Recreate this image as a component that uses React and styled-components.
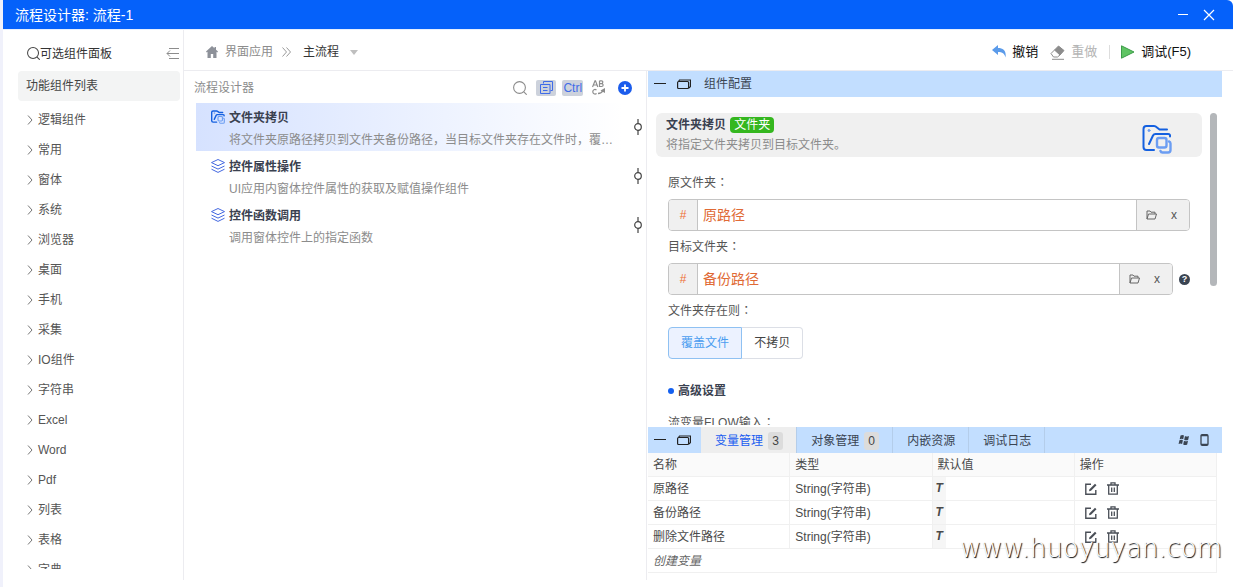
import React, { useState } from 'react';
import styled, { createGlobalStyle } from 'styled-components';

const groups = [
  '逻辑组件', '常用', '窗体', '系统', '浏览器', '桌面', '手机', '采集',
  'IO组件', '字符串', 'Excel', 'Word', 'Pdf', '列表', '表格', '字典',
];

const steps = [
  {
    id: 1,
    icon: 'folder',
    title: '文件夹拷贝',
    desc: '将文件夹原路径拷贝到文件夹备份路径，当目标文件夹存在文件时，覆盖文件',
  },
  { id: 2, icon: 'layers', title: '控件属性操作', desc: 'UI应用内窗体控件属性的获取及赋值操作组件' },
  { id: 3, icon: 'layers', title: '控件函数调用', desc: '调用窗体控件上的指定函数' },
];

const tabs = [
  { label: '变量管理', count: 3 },
  { label: '对象管理', count: 0 },
  { label: '内嵌资源' },
  { label: '调试日志' },
];

const variables = ['原路径', '备份路径', '删除文件路径'];

const App = () => {
  const [activeStep, setActiveStep] = useState(1);
  const [activeTab, setActiveTab] = useState('变量管理');
  const [mode, setMode] = useState('覆盖文件');

  return (
    <>
      <GlobalStyle />
      <Window>
        <TitleBar>
          <WindowTitle>流程设计器: 流程-1</WindowTitle>
          <TitleButton aria-label="最小化">
            <svg width="12" height="12" viewBox="0 0 12 12" stroke="#fff" fill="none">
              <path d="M1 5.500h10" />
            </svg>
          </TitleButton>
          <TitleButton aria-label="关闭">
            <svg width="12" height="12" viewBox="0 0 12 12" stroke="#fff" strokeWidth="1.2" fill="none">
              <path d="M1 1l10 10M11 1L1 11" />
            </svg>
          </TitleButton>
        </TitleBar>

        <Body>
          {/* Component list */}
          <Sidebar>
            <SidebarHead>
              <SearchIcon size={13} color="#444" />
              <SidebarTitle>可选组件面板</SidebarTitle>
              <IconButton aria-label="收起">
                <svg width="14" height="14" viewBox="0 0 14 14" stroke="#8c8c8c" fill="none">
                  <path d="M3 1.5h10M6 6.500h7M3 11.500h10M4 3.500L1 6.500l3 3M1 6.500h5" />
                </svg>
              </IconButton>
            </SidebarHead>
            <ListHeading>功能组件列表</ListHeading>
            <GroupList>
              {groups.map((name) => (
                <li key={name}>
                  <GroupButton>
                    <svg width="6" height="10" viewBox="0 0 6 10" stroke="#777" fill="none">
                      <path d="M1 .5L5 5 1 9.5" />
                    </svg>
                    {name}
                  </GroupButton>
                </li>
              ))}
            </GroupList>
          </Sidebar>

          <Main>
            <TopBar>
              <svg width="12" height="12" viewBox="0 0 12 12" fill="#8d9199">
                <path d="M6 0L0 5.6l.7.8.8-.7V12h3.300V8h2.400v4h3.300V5.700l.8.7.7-.8L10 3.700V1H8.500v1.300z" />
              </svg>
              <Crumb href="#app">界面应用</Crumb>
              <svg width="9" height="10" viewBox="0 0 9 10" stroke="#999" fill="none">
                <path d="M.5.500L4.500 5l-4 4.500M4.500.5l4 4.500-4 4.500" />
              </svg>
              <FlowButton>
                主流程
                <svg width="8" height="5" viewBox="0 0 8 5" fill="#bfbfbf">
                  <path d="M0 0h8L4 5z" />
                </svg>
              </FlowButton>
              <Actions>
                <ActionButton>
                  <svg width="14" height="14" viewBox="0 0 14 14" fill="#5b9bea">
                    <path d="M0 5L6 0v3c5.500 0 8.500 3.200 7.500 9.500C12.500 8.500 10.500 7 6 7v3z" />
                  </svg>
                  撤销
                </ActionButton>
                <ActionButton disabled>
                  <svg width="15" height="15" viewBox="0 0 15 15" fill="none" stroke="#8c8c8c">
                    <path d="M8.500 1l5.500 4.500-4 4.500-5.500-5z" fill="#8c8c8c" />
                    <path d="M4.500 5L1 8.500 3.500 12h4L10 10M2 14.300h12" />
                  </svg>
                  重做
                </ActionButton>
                <Separator />
                <ActionButton>
                  <svg width="14" height="14" viewBox="0 0 14 14" fill="#5fc463" stroke="#3d9b4a">
                    <path d="M.5.800L13 7 .5 13.200z" />
                  </svg>
                  调试(F5)
                </ActionButton>
              </Actions>
            </TopBar>

            <Workspace>
              {/* Flow steps */}
              <Designer>
                <DesignerHead>
                  <DesignerTitle>流程设计器</DesignerTitle>
                  <ToolButton aria-label="搜索"><SearchIcon size={14} color="#8c8c8c" /></ToolButton>
                  <ToolButton $on aria-label="复制">
                    <svg width="13" height="13" viewBox="0 0 13 13" stroke="#3f6be8" fill="none">
                      <path d="M3.500 2.500V.5h9v9h-2M.5 3.500h9.500v9H.5zM3 6.500h4.500M3 9.500h4.500" />
                    </svg>
                  </ToolButton>
                  <ToolButton $on>Ctrl</ToolButton>
                  <ToolButton aria-label="重命名">
                    <svg width="14" height="15" viewBox="0 0 14 15" stroke="#8c8c8c" strokeWidth="1.200" fill="none">
                      <path d="M.5 7L3 .8h.5L5.800 7M1.400 5h3.600M7.500.8v5.700h2c2.200 0 2.200-2.900 0-2.900h-2M9.500 3.600c1.700 0 1.700-2.800 0-2.800h-2M4.500 10C2.800 8.800.8 9.800.8 11.700s2 3 3.800 1.800" />
                      <path d="M6 13.500c3 0 4-1 5-3" strokeWidth="1.300" />
                      <path d="M8.500 10.500l4.500-2.500v5z" fill="#8c8c8c" stroke="none" />
                    </svg>
                  </ToolButton>
                  <ToolButton aria-label="添加">
                    <svg width="14" height="14" viewBox="0 0 14 14">
                      <circle cx="7" cy="7" r="7" fill="#1b5cec" />
                      <path d="M7 3.500v7M3.500 7h7" stroke="#fff" strokeWidth="1.800" />
                    </svg>
                  </ToolButton>
                </DesignerHead>
                <StepList>
                  {steps.map((step) => (
                    <StepRow key={step.id}>
                      <Step $active={step.id === activeStep} onClick={() => setActiveStep(step.id)}>
                        {step.icon === 'folder' ? <FolderCopyIcon size={14} stroke={3} /> : <LayersIcon />}
                        <StepText>
                          <StepTitle>{step.title}</StepTitle>
                          <StepDesc>{step.desc}</StepDesc>
                        </StepText>
                      </Step>
                      <svg width="8" height="16" viewBox="0 0 8 16" stroke="#444" strokeWidth="1.200" fill="none">
                        <circle cx="4" cy="8" r="3.300" />
                        <path d="M4 0v4.700M4 11.300V16" />
                      </svg>
                    </StepRow>
                  ))}
                </StepList>
              </Designer>

              {/* Config + variables */}
              <Inspector>
                <PanelBar>
                  <PanelControls />
                  <PanelTitle>组件配置</PanelTitle>
                </PanelBar>
                <ConfigArea>
                  <ConfigBody>
                    <InfoCard>
                      <div>
                        <CardTitle>文件夹拷贝 <Tag>文件夹</Tag></CardTitle>
                        <CardText>将指定文件夹拷贝到目标文件夹。</CardText>
                      </div>
                      <FolderCopyIcon size={30} stroke={2} />
                    </InfoCard>
                    <Form>
                      <PathField id="source" label="原文件夹" value="原路径" />
                      <PathField id="target" label="目标文件夹" value="备份路径" help />
                      <FieldLabel as="div">文件夹存在则<Colon>：</Colon></FieldLabel>
                      <Segmented>
                        {['覆盖文件', '不拷贝'].map((name) => (
                          <Segment key={name} $on={mode === name}>
                            <input
                              type="radio"
                              name="mode"
                              checked={mode === name}
                              onChange={() => setMode(name)}
                            />
                            {name}
                          </Segment>
                        ))}
                      </Segmented>
                      <SectionTitle>高级设置</SectionTitle>
                      <FieldLabel as="div">流变量FLOW输入<Colon>：</Colon></FieldLabel>
                    </Form>
                  </ConfigBody>
                  <ScrollThumb />
                </ConfigArea>

                <PanelBar>
                  <PanelControls />
                  <Tabs>
                    {tabs.map((tab) => (
                      <Tab key={tab.label} $active={tab.label === activeTab} onClick={() => setActiveTab(tab.label)}>
                        {tab.label}
                        {tab.count !== undefined && <Count>{tab.count}</Count>}
                      </Tab>
                    ))}
                  </Tabs>
                  <BarIcons>
                    <IconButton aria-label="Windows">
                      <svg width="12" height="12" viewBox="0 0 12 12" fill="#3a4452">
                        <path d="M2.500 1.500q2-1 3.500 0L5.200 5.300q-1.700-1-3.500 0zM7 2q1.800 1 4 0l-.8 3.700q-2 1-4 0zM1.400 6.300q1.800-1 3.500 0L4.100 10q-1.700-1-3.500 0zM6 6.700q1.800 1 4 0l-.8 3.800q-2 1-4 0z" />
                      </svg>
                    </IconButton>
                    <IconButton aria-label="手机">
                      <svg width="9" height="12" viewBox="0 0 9 12" fill="none" stroke="#3a4452" strokeWidth="1.300">
                        <rect x="1" y=".7" width="7" height="10.600" rx="1.200" />
                        <path d="M1 1.500h7M1 10.300h7" />
                      </svg>
                    </IconButton>
                  </BarIcons>
                </PanelBar>
                <TableWrap>
                  <Table>
                    <thead>
                      <tr>
                        <th>名称</th>
                        <th>类型</th>
                        <th>默认值</th>
                        <th>操作</th>
                      </tr>
                    </thead>
                    <tbody>
                      {variables.map((name) => (
                        <tr key={name}>
                          <td>{name}</td>
                          <td>String(字符串)</td>
                          <ValueCell>
                            <ValueBox>
                              <TypeMark>T</TypeMark>
                              <ValueInput aria-label={name} />
                            </ValueBox>
                          </ValueCell>
                          <ActionCell>
                            <RowActions>
                              <IconButton aria-label="编辑"><EditIcon /></IconButton>
                              <IconButton aria-label="删除"><TrashIcon /></IconButton>
                            </RowActions>
                          </ActionCell>
                        </tr>
                      ))}
                      <tr>
                        <td colSpan={4}><CreateButton>创建变量</CreateButton></td>
                      </tr>
                    </tbody>
                  </Table>
                </TableWrap>
              </Inspector>
            </Workspace>
          </Main>
        </Body>
        <Watermark>www.huoyuyan.com</Watermark>
      </Window>
    </>
  );
};

const PathField = ({ id, label, value, help }) => (
  <>
    <FieldLabel htmlFor={id}>{label}<Colon>：</Colon></FieldLabel>
    <FieldRow>
      <InputGroup>
        <Prefix>#</Prefix>
        <PathInput id={id} defaultValue={value} />
        <Suffix>
          <IconButton aria-label="选择文件夹">
            <svg width="11" height="10" viewBox="0 0 11 10" fill="none" stroke="#666">
              <path d="M1 9V1h3l1 1.200h4V4M1 9l1.500-5h8L9 9z" />
            </svg>
          </IconButton>
          <IconButton aria-label="清除">x</IconButton>
        </Suffix>
      </InputGroup>
      {help && <Help aria-label="帮助">?</Help>}
    </FieldRow>
  </>
);

const PanelControls = () => (
  <Controls>
    <IconButton aria-label="收起面板">
      <svg width="12" height="12" viewBox="0 0 12 12" stroke="#222" fill="none">
        <path d="M0 5.500h12" />
      </svg>
    </IconButton>
    <IconButton aria-label="还原面板">
      <svg width="14" height="12" viewBox="0 0 14 12" stroke="#222" fill="none">
        <path d="M1.500 3.500l1-1.500h11v6.500l-1.500 1.500" strokeWidth="1.200" />
        <rect x=".6" y="3.500" width="11" height="7" rx="1" strokeWidth="1.200" />
      </svg>
    </IconButton>
  </Controls>
);

const SearchIcon = ({ size, color }) => (
  <svg width={size} height={size} viewBox="0 0 14 14" stroke={color} strokeWidth="1.100" fill="none">
    <circle cx="6.500" cy="6.500" r="5.900" />
    <path d="M10.800 10.800l2.900 2.900" />
  </svg>
);

const FolderCopyIcon = ({ size, stroke }) => (
  <svg width={size} height={size} viewBox="0 0 30 30" fill="none" stroke="#1460e0" strokeWidth={stroke} strokeLinecap="round" strokeLinejoin="round">
    <path d="M12 26H4.500Q1.500 26 1.500 23V5Q1.500 2 4.500 2h7.500q1.500 0 3 1.500L17.500 5.500H25M7 20l4-8.500q.8-1.500 2.500-1.500H26q2.500 0 2 2.500" />
    <circle cx="7" cy="6.500" r="1" fill="#6b9df2" stroke="#6b9df2" strokeWidth="1" />
    <g stroke="#6b9df2" strokeWidth="2.400">
      <rect x="15" y="14" width="9.500" height="9.500" rx="2" />
      <path d="M27 17.500q1.500.5 1.500 2V26q0 2.500-2.500 2.500H20.500q-1.500 0-2-1.500" />
    </g>
  </svg>
);

const LayersIcon = () => (
  <svg width="14" height="14" viewBox="0 0 14 14" fill="none" stroke="#4468e0" strokeLinejoin="round">
    <path d="M7 .5L13.500 3.600 7 6.700.5 3.600zM.5 7L7 10.100 13.500 7M.5 10.200L7 13.400l6.500-3.200" />
  </svg>
);

const EditIcon = () => (
  <svg width="12" height="12" viewBox="0 0 12 12" fill="none" stroke="#4a4f57" strokeWidth="1.400">
    <path d="M6 1.200H.8v10h10V7" />
    <path d="M4 8.200l.5-2L10 .800 11.500 2.200 6 7.700z" fill="#4a4f57" stroke="none" />
  </svg>
);

const TrashIcon = () => (
  <svg width="12" height="13" viewBox="0 0 12 13" fill="none" stroke="#4a4f57" strokeWidth="1.300">
    <path d="M0 3h12M1.700 3v9.200h8.600V3M4 3V.800h4V3M4.700 5.500v4.500M7.300 5.500v4.500" />
  </svg>
);

// Styled Components
const GlobalStyle = createGlobalStyle`
  * {
    box-sizing: border-box;
  }

  body {
    margin: 0;
    background: #fff;
    color: #555;
    font: 12px/24px "Liberation Sans", "Noto Sans CJK SC", sans-serif;
  }

  button, input {
    font: inherit;
    color: inherit;
    border: 0;
    padding: 0;
    background: none;
  }

  button {
    cursor: pointer;
  }

  svg {
    display: block;
    flex: none;
  }
`;

const Window = styled.div`
  position: relative;
  display: flex;
  flex-direction: column;
  height: 100vh;
  border-left: 3px solid #f0f1fb;
  padding-bottom: 7px;
  overflow: hidden;
`;

const TitleBar = styled.header`
  display: flex;
  align-items: center;
  gap: 14px;
  flex: none;
  height: 29px;
  padding: 0 18px 0 12px;
  background: #0561fa;
  border-top-right-radius: 6px;
  color: #fff;
`;

const WindowTitle = styled.h1`
  flex: 1;
  margin: 0;
  font-size: 14px;
  font-weight: 400;
`;

const TitleButton = styled.button`
  display: flex;
`;

const Body = styled.div`
  display: flex;
  flex: 1;
  min-height: 0;
  border-top: 1px solid #e6efff;
`;

const Sidebar = styled.aside`
  display: flex;
  flex-direction: column;
  flex: none;
  width: 181px;
  padding: 0 3px 11px 15px;
  border-right: 1px solid #ececf0;
`;

const SidebarHead = styled.div`
  display: flex;
  align-items: center;
  flex: none;
  height: 41px;
  padding: 6px 0 0 9px;
`;

const SidebarTitle = styled.span`
  flex: 1;
  color: #333;
`;

const IconButton = styled.button`
  display: flex;
  align-items: center;
  justify-content: center;
`;

const ListHeading = styled.h2`
  flex: none;
  margin: 0 0 3px;
  padding: 0 8px;
  border-radius: 4px;
  background: #f3f4f4;
  color: #444;
  font-size: 12px;
  font-weight: 400;
  line-height: 30px;
`;

const GroupList = styled.ul`
  flex: 1;
  min-height: 0;
  margin: 0;
  padding: 1px 0 0 9px;
  overflow: hidden;
  list-style: none;
`;

const GroupButton = styled.button`
  display: flex;
  align-items: center;
  gap: 5px;
  width: 100%;
  height: 30px;
`;

const Main = styled.main`
  display: flex;
  flex-direction: column;
  flex: 1;
  min-width: 0;
`;

const TopBar = styled.nav`
  display: flex;
  align-items: center;
  flex: none;
  height: 41px;
  padding: 4px 42px 0 22px;
  border-bottom: 1px solid #ececf0;
`;

const Crumb = styled.a`
  margin: 0 9px 0 7px;
  color: #8c8c8c;
  text-decoration: none;
`;

const FlowButton = styled.button`
  display: flex;
  align-items: center;
  gap: 11px;
  margin-left: 12px;
  color: #333;
`;

const Actions = styled.div`
  display: flex;
  align-items: center;
  gap: 12px;
  margin-left: auto;
`;

const ActionButton = styled.button`
  display: flex;
  align-items: center;
  gap: 6px;
  color: #111;
  font-size: 13px;

  &:disabled {
    color: #b5b5b5;
  }
`;

const Separator = styled.span`
  width: 1px;
  height: 14px;
  margin-right: -1px;
  background: #ddd;
`;

const Workspace = styled.div`
  display: flex;
  flex: 1;
  min-height: 0;
  padding-right: 11px;
`;

const Designer = styled.section`
  flex: 463 1 0;
  min-width: 0;
  border-right: 1px solid #ececf0;
`;

const DesignerHead = styled.div`
  display: flex;
  align-items: center;
  gap: 6px;
  height: 32px;
  padding: 1px 11px 0 10px;
`;

const DesignerTitle = styled.h2`
  flex: 1;
  margin: 0;
  color: #8c8c8c;
  font-size: 12px;
  font-weight: 400;
`;

const ToolButton = styled.button`
  display: flex;
  align-items: center;
  justify-content: center;
  min-width: 20px;
  height: 16px;
  padding: 0 1px;
  border-radius: 2px;
  background: ${({ $on }) => ($on ? '#cdd2dc' : 'none')};
  color: #3f6be8;
`;

const StepList = styled.div`
  display: flex;
  flex-direction: column;
  gap: 1px;
  padding: 0 4px 0 12px;
`;

const StepRow = styled.div`
  display: flex;
  align-items: center;
  gap: 12px;
`;

const Step = styled.button`
  display: flex;
  flex: 1;
  gap: 4px;
  min-width: 0;
  padding: 4px 6px 0 15px;
  background: ${({ $active }) => ($active ? 'linear-gradient(90deg, #d6e2ff, #fff)' : 'none')};
  text-align: left;

  > svg {
    margin-top: 3px;
  }
`;

const StepText = styled.span`
  min-width: 0;
  line-height: 22px;
`;

const StepTitle = styled.strong`
  display: block;
  color: #3a4150;
`;

const StepDesc = styled.span`
  display: block;
  overflow: hidden;
  color: #8c8c8c;
  text-overflow: ellipsis;
  white-space: nowrap;
`;

const Inspector = styled.section`
  display: flex;
  flex-direction: column;
  flex: 575 1 0;
  min-width: 0;
  padding-left: 1px;
`;

const PanelBar = styled.div`
  display: flex;
  align-items: center;
  flex: none;
  height: 26px;
  background: #c2deff;
`;

const Controls = styled.div`
  display: flex;
  align-items: center;
  gap: 11px;
  padding: 0 10px 0 6px;
`;

const PanelTitle = styled.h2`
  margin: 0 3px;
  color: #3a4452;
  font-size: 12px;
  font-weight: 400;
`;

const ConfigArea = styled.div`
  display: flex;
  gap: 8px;
  flex: 1;
  min-height: 0;
  margin-bottom: 2px;
  padding: 16px 5px 0 8px;
  overflow: hidden;
`;

const ConfigBody = styled.div`
  flex: 1;
  min-width: 0;
`;

const InfoCard = styled.div`
  display: flex;
  justify-content: space-between;
  height: 44px;
  padding: 2px 30px 0 10px;
  border-radius: 6px;
  background: #f0f0f0;
  line-height: 20px;

  > svg {
    margin-top: 9px;
  }
`;

const CardTitle = styled.h3`
  display: flex;
  align-items: center;
  gap: 4px;
  margin: 0;
  color: #3a4150;
  font-size: 12px;
`;

const Tag = styled.span`
  padding: 0 4px;
  border-radius: 4px;
  background: #35b71f;
  color: #fff;
  font-weight: 400;
  line-height: 16px;
`;

const CardText = styled.p`
  margin: 0;
  color: #8c8c8c;
`;

const Form = styled.form`
  padding: 10px 12px 0;
`;

const FieldLabel = styled.label`
  display: block;
  height: 32px;
  line-height: 32px;
`;

// the TC face keeps the colon in the middle of its box
const Colon = styled.span`
  font-family: "Noto Sans CJK TC", sans-serif;
  line-height: 1;
`;

const FieldRow = styled.div`
  display: flex;
  align-items: center;
  gap: 6px;
`;

const InputGroup = styled.div`
  display: flex;
  flex: 1;
  height: 32px;
  border: 1px solid #c4c4c4;
  border-radius: 4px;
  overflow: hidden;
`;

const Prefix = styled.span`
  flex: none;
  width: 29px;
  border-right: 1px solid #c4c4c4;
  background: #f0f0f0;
  color: #ee6f33;
  line-height: 30px;
  text-align: center;
`;

const PathInput = styled.input`
  flex: 1;
  min-width: 0;
  height: 28px;
  padding: 0 5px;
  outline: 0;
  color: #e06a35;
  font-size: 14px;
`;

const Suffix = styled.span`
  display: flex;
  align-items: center;
  gap: 14px;
  padding: 0 12px 0 9px;
  border-left: 1px solid #c4c4c4;
  background: #f0f0f0;
`;

const Help = styled.button`
  width: 11px;
  height: 11px;
  border-radius: 50%;
  background: #3a4452;
  color: #fff;
  font-size: 9px;
  font-weight: 700;
  line-height: 11px;
`;

const Segmented = styled.div`
  display: flex;
`;

const Segment = styled.label`
  height: 32px;
  padding: 0 12px;
  border: 1px solid ${({ $on }) => ($on ? '#8fc1f2' : '#dcdfe6')};
  background: ${({ $on }) => ($on ? '#ecf2ff' : '#fff')};
  color: ${({ $on }) => ($on ? '#4a9df0' : '#444')};
  line-height: 30px;
  cursor: pointer;

  &:first-child {
    border-radius: 4px 0 0 4px;
  }

  &:last-child {
    border-left: 0;
    border-radius: 0 4px 4px 0;
  }

  input {
    position: absolute;
    opacity: 0;
    pointer-events: none;
  }
`;

const SectionTitle = styled.h3`
  display: flex;
  align-items: center;
  gap: 4px;
  margin: 16px 0 0;
  color: #3a4150;
  font-size: 12px;
  line-height: 32px;

  &::before {
    content: '';
    width: 6px;
    height: 6px;
    border-radius: 50%;
    background: #1460f0;
  }
`;

const ScrollThumb = styled.div`
  flex: none;
  width: 7px;
  height: 173px;
  border-radius: 4px;
  background: #b4b7ba;
`;

const Tabs = styled.div`
  display: flex;
  height: 26px;
`;

const Tab = styled.button`
  display: flex;
  align-items: center;
  gap: 5px;
  padding: 2px 13px 0 14px;
  border-right: 1px solid #b4cdea;
  background: ${({ $active }) => ($active ? '#eeeeee' : 'none')};
  color: ${({ $active }) => ($active ? '#1a5df0' : '#3a4452')};
`;

const Count = styled.span`
  width: 15px;
  border-radius: 3px;
  background: #dcdcdc;
  color: #444;
  line-height: 18px;
  text-align: center;
`;

const BarIcons = styled.div`
  display: flex;
  gap: 10px;
  margin-left: auto;
  padding-right: 13px;
`;

const TableWrap = styled.div`
  flex: none;
  padding: 0 5px 7px 0;
`;

const Table = styled.table`
  width: 100%;
  border-spacing: 0;
  table-layout: fixed;
  color: #4a4a4a;

  th, td {
    height: 24px;
    padding: 2px 5px 0;
    border-right: 1px solid #f0f0f0;
    border-bottom: 1px solid #f0f0f0;
    font-weight: 400;
    line-height: 21px;
    text-align: left;
  }

  th {
    background: #fafafa;
  }
`;

const ValueCell = styled.td`
  && {
    padding: 0;
  }
`;

const ValueBox = styled.div`
  display: flex;
  line-height: 23px;
`;

const TypeMark = styled.span`
  width: 13px;
  background: #f6f6f6;
  font-style: italic;
  font-weight: 700;
  text-align: center;
`;

const ValueInput = styled.input`
  flex: 1;
  min-width: 0;
  height: 23px;
`;

const ActionCell = styled.td`
  && {
    padding: 0 10px;
  }
`;

const RowActions = styled.div`
  display: flex;
  align-items: center;
  gap: 10px;
  height: 23px;
`;

const CreateButton = styled.button`
  display: block;
  color: #666;
  font-style: italic;
  line-height: 21px;
`;

const Watermark = styled.div`
  position: absolute;
  right: 11px;
  bottom: 23px;
  color: #fff;
  font-family: "DejaVu Sans", sans-serif;
  font-size: 26px;
  font-weight: 200;
  line-height: 32px;
  text-shadow: 1px 1px 1px #000;
  pointer-events: none;
`;

export default App;
